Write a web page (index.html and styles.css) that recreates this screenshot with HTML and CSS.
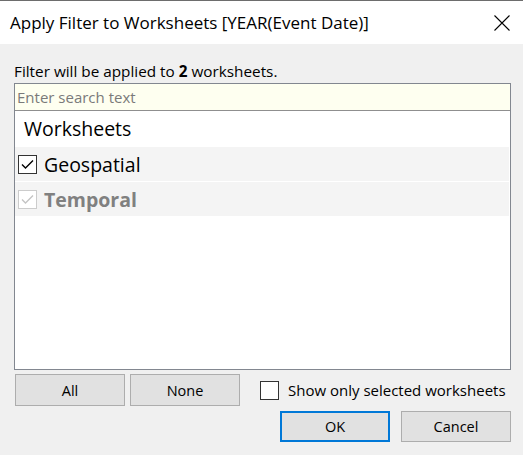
FILE: index.html
```html
<!DOCTYPE html>
<html>
<head>
<meta charset="utf-8">
<link rel="stylesheet" href="styles.css">
</head>
<body>
<div class="dialog">
  <div class="titlebar">
    <span class="title">Apply Filter to Worksheets [YEAR(Event Date)]</span>
    <svg class="close" width="16" height="16" viewBox="0 0 16 16"><path d="M0.5 0.5 L15.5 15.5 M15.5 0.5 L0.5 15.5" stroke="#000" stroke-width="1.1" fill="none"/></svg>
  </div>
  <div class="content">
    <div class="info">Filter will be applied to <b>2</b> worksheets.</div>
    <div class="listbox">
      <div class="search">Enter search text</div>
      <div class="list">
        <div class="header">Worksheets</div>
        <div class="row">
          <span class="cb checked"><svg width="17" height="17" viewBox="0 0 17 17"><path d="M3 8.5 L6.5 12 L14 4.5" stroke="#000" stroke-width="1.4" fill="none"/></svg></span>
          <span class="label">Geospatial</span>
        </div>
        <div class="row disabled">
          <span class="cb checked dis"><svg width="17" height="17" viewBox="0 0 17 17"><path d="M3 8.5 L6.5 12 L14 4.5" stroke="#c4c4c4" stroke-width="1.4" fill="none"/></svg></span>
          <span class="label">Temporal</span>
        </div>
      </div>
    </div>
    <div class="controls">
      <button class="btn">All</button>
      <button class="btn">None</button>
      <label class="showonly"><span class="cb empty"></span>Show only selected worksheets</label>
    </div>
    <div class="actions">
      <button class="btn primary">OK</button>
      <button class="btn">Cancel</button>
    </div>
  </div>
</div>
</body>
</html>
```
FILE: styles.css
```css
* { box-sizing: border-box; }
html, body { margin: 0; padding: 0; }
body {
  width: 523px;
  height: 455px;
  background: #f0f0f0;
  font-family: "Open Sans", "Noto Sans", sans-serif;
  color: #000;
  overflow: hidden;
}
.dialog { width: 523px; height: 455px; display: flex; flex-direction: column; }
.titlebar {
  height: 44px;
  background: #fff;
  border-top: 1px solid #6d6d6d;
  display: flex;
  align-items: center;
  justify-content: space-between;
  padding: 0 13px 0 10px;
}
.title { font-size: 17px; }
.close { display: block; }
.content { flex: 1; padding: 17px 12px 0 14px; }
.info { font-size: 15.3px; line-height: 20px; height: 22px; }
.listbox {
  width: 497px;
  height: 287px;
  border: 1px solid #828790;
  background: #fff;
  display: flex;
  flex-direction: column;
}
.search {
  height: 27px;
  background: #fefff0;
  border-bottom: 1px solid #8f8f8f;
  color: #7a7a7a;
  font-size: 15px;
  line-height: 26px;
  padding-left: 2px;
}
.list { flex: 1; }
.header {
  height: 36px;
  font-size: 19.5px;
  line-height: 36px;
  padding-left: 9px;
}
.row {
  height: 35px;
  background: #f4f4f4;
  display: flex;
  align-items: center;
  padding-left: 3px;
  margin-right: 1px;
  border-bottom: 1px solid #fff;
}
.row.disabled { color: #808080; font-weight: bold; }
.label { font-size: 19.5px; margin-left: 7px; }
.cb {
  width: 19px;
  height: 19px;
  border: 1px solid #333;
  background: #fff;
  display: inline-flex;
  align-items: center;
  justify-content: center;
}
.cb.dis { border-color: #cccccc; }
.controls {
  display: flex;
  align-items: center;
  margin-top: 4px;
  margin-left: 1px;
  height: 32px;
}
.btn {
  width: 110px;
  height: 32px;
  background: #e1e1e1;
  border: 1px solid #adadad;
  font-family: "Open Sans", "Noto Sans", sans-serif;
  font-size: 14.5px;
  color: #000;
  padding: 0;
}
.controls .btn + .btn { margin-left: 5px; }
.showonly {
  display: flex;
  align-items: center;
  margin-left: 20px;
  font-size: 15px;
}
.showonly .cb { margin-right: 9px; border-color: #333; }
.actions {
  display: flex;
  justify-content: flex-end;
  margin-top: 5px;
  gap: 11px;
}
.actions .btn { height: 31px; }
.btn.primary { border: 2px solid #0078d7; }
```
